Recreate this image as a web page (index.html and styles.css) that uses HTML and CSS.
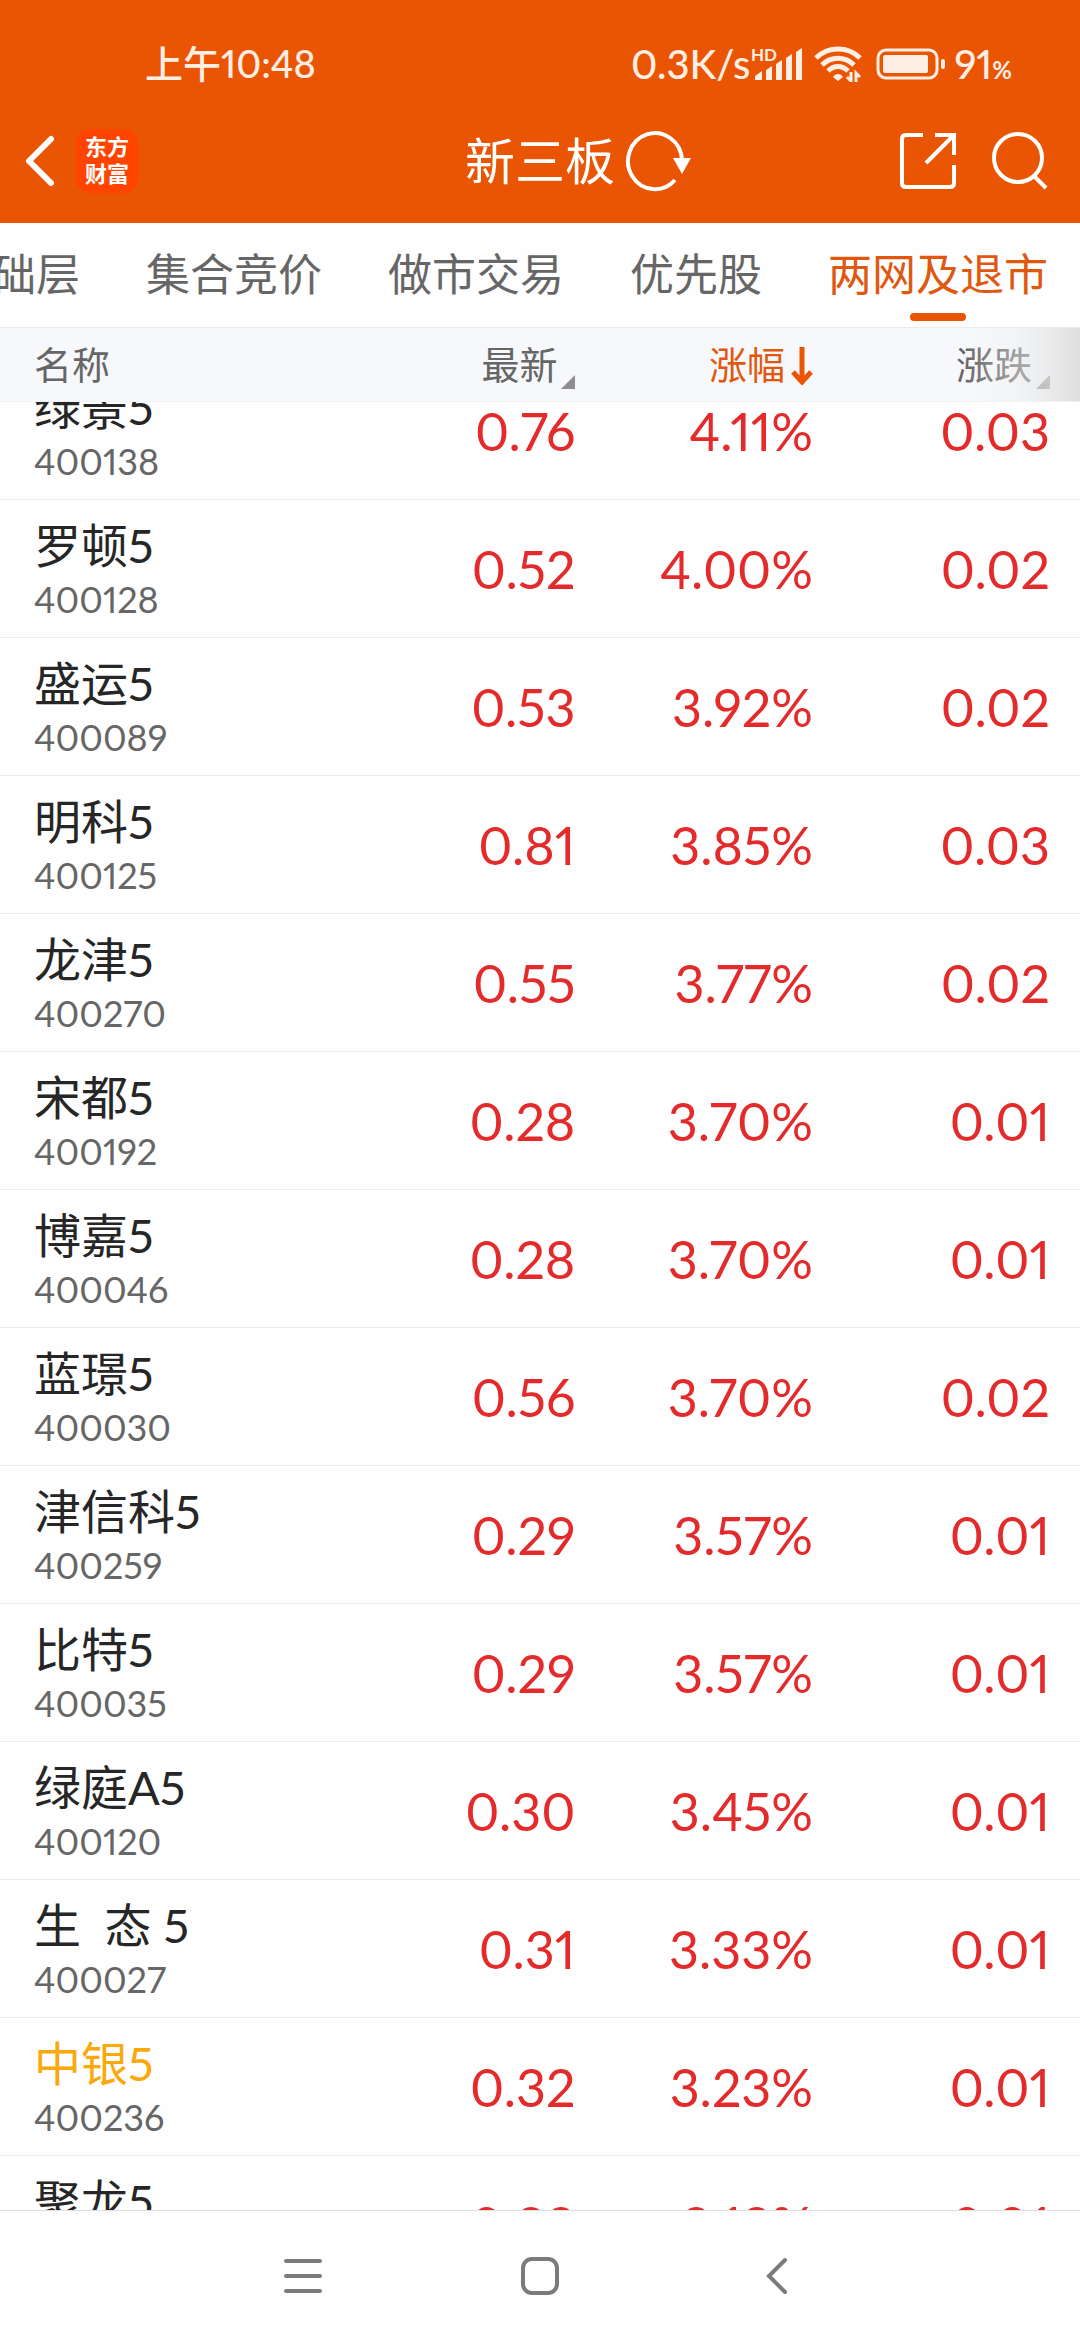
FILE: index.html
```html
<!DOCTYPE html>
<html lang="zh-CN">
<head>
<meta charset="UTF-8">
<meta name="viewport" content="width=device-width, initial-scale=1.0">
<title>新三板</title>
<link rel="stylesheet" href="styles.css">
<script src="main.js" defer></script>
</head>
<body>
    <header class="top">
        <div class="status">
            <span class="time">上午10:48</span>
            <div class="status-right">
                <span>0.3K/s</span>
                <svg class="signal" width="54" height="36" viewBox="0 0 54 36">
                    <text x="1" y="15" class="hd">HD</text>
                    <path d="M5 30l7-5v9H5zM16 24l6-4v14h-6zM26 18l6-4v20h-6zM36 12l6-4v26h-6zM46 6l6-4v32h-6z"/>
                </svg>
                <svg class="wifi" width="48" height="36" viewBox="0 0 48 36">
                    <g fill="none" stroke-width="5">
                        <path d="M2 12C14 0 34 0 46 12"/>
                        <path d="M8 19C17 10 31 10 40 19"/>
                        <path d="M14 25C20 19 28 19 34 25"/>
                    </g>
                    <path d="M19 31c2-4 8-4 10 0l-5 4z" stroke="none"/>
                    <path d="M37 26v9l-4-4M42 36v-9l4 4" fill="none" stroke-width="3"/>
                </svg>
                <svg class="battery" width="70" height="32" viewBox="0 0 70 32">
                    <rect x="2" y="2" width="59" height="28" rx="8" fill="none" stroke-width="3"/>
                    <rect x="7" y="7" width="45" height="18" rx="2" stroke="none"/>
                    <rect x="65" y="11" width="4" height="10" rx="2" stroke="none"/>
                </svg>
                <span>91<small>%</small></span>
            </div>
        </div>
        <div class="bar">
            <div class="bar-left">
                <button class="icon-btn" aria-label="返回">
                    <svg width="32" height="52" viewBox="0 0 32 52"><path d="M27 4L5 26l22 22" fill="none" stroke="#fff" stroke-width="6" stroke-linecap="round" stroke-linejoin="round"/></svg>
                </button>
                <a class="logo" href="#">东方<br>财富</a>
            </div>
            <div class="bar-title">
                <h1>新三板</h1>
                <button class="icon-btn" aria-label="刷新">
                    <svg width="68" height="62" viewBox="0 0 68 62">
                        <path d="M57 30A27 28 0 1 0 50 50" fill="none" stroke="#fff" stroke-width="4"/>
                        <path d="M48 28h18l-9 16z" fill="#fff"/>
                    </svg>
                </button>
            </div>
            <div class="bar-right">
                <button class="icon-btn" aria-label="分享">
                    <svg width="56" height="56" viewBox="0 0 56 56">
                        <path d="M23 2H6Q2 2 2 6v44q0 4 4 4h44q4 0 4-4V32M35 2h19v20M54 2L26 30" fill="none" stroke="#fff" stroke-width="4"/>
                    </svg>
                </button>
                <button class="icon-btn" aria-label="搜索">
                    <svg width="56" height="58" viewBox="0 0 56 58">
                        <circle cx="26" cy="26" r="24" fill="none" stroke="#fff" stroke-width="4"/>
                        <path d="M42 44l12 12" stroke="#fff" stroke-width="4"/>
                    </svg>
                </button>
            </div>
        </div>
    </header>

    <nav class="tabs">
        <a href="#">基础层</a>
        <a href="#">集合竞价</a>
        <a href="#">做市交易</a>
        <a href="#">优先股</a>
        <a href="#" class="on">两网及退市</a>
    </nav>

    <!-- 行情列表 -->
    <main class="list" id="list">
        <table>
            <thead>
                <tr>
                    <th class="name">名称</th>
                    <th class="price">最新<i class="tri"></i></th>
                    <th class="rate on">涨幅<svg class="arrow" width="22" height="38" viewBox="0 0 22 38"><path d="M11 0v34M2 25l9 10 9-10" fill="none" stroke="#ea5504" stroke-width="5"/></svg></th>
                    <th class="diff">涨跌<i class="tri"></i></th>
                </tr>
            </thead>
            <tbody>
                <tr><td class="name"><b>绿景5</b><span>400138</span></td><td>0.76</td><td>4.11%</td><td class="diff">0.03</td></tr>
                <tr><td class="name"><b>罗顿5</b><span>400128</span></td><td>0.52</td><td>4.00%</td><td class="diff">0.02</td></tr>
                <tr><td class="name"><b>盛运5</b><span>400089</span></td><td>0.53</td><td>3.92%</td><td class="diff">0.02</td></tr>
                <tr><td class="name"><b>明科5</b><span>400125</span></td><td>0.81</td><td>3.85%</td><td class="diff">0.03</td></tr>
                <tr><td class="name"><b>龙津5</b><span>400270</span></td><td>0.55</td><td>3.77%</td><td class="diff">0.02</td></tr>
                <tr><td class="name"><b>宋都5</b><span>400192</span></td><td>0.28</td><td>3.70%</td><td class="diff">0.01</td></tr>
                <tr><td class="name"><b>博嘉5</b><span>400046</span></td><td>0.28</td><td>3.70%</td><td class="diff">0.01</td></tr>
                <tr><td class="name"><b>蓝璟5</b><span>400030</span></td><td>0.56</td><td>3.70%</td><td class="diff">0.02</td></tr>
                <tr><td class="name"><b>津信科5</b><span>400259</span></td><td>0.29</td><td>3.57%</td><td class="diff">0.01</td></tr>
                <tr><td class="name"><b>比特5</b><span>400035</span></td><td>0.29</td><td>3.57%</td><td class="diff">0.01</td></tr>
                <tr><td class="name"><b>绿庭A5</b><span>400120</span></td><td>0.30</td><td>3.45%</td><td class="diff">0.01</td></tr>
                <tr><td class="name"><b>生&ensp;态 5</b><span>400027</span></td><td>0.31</td><td>3.33%</td><td class="diff">0.01</td></tr>
                <tr><td class="name mine"><b>中银5</b><span>400236</span></td><td>0.32</td><td>3.23%</td><td class="diff">0.01</td></tr>
                <tr><td class="name"><b>聚龙5</b></td><td>0.33</td><td>3.13%</td><td class="diff">0.01</td></tr>
            </tbody>
        </table>
    </main>

    <!-- 系统导航键 -->
    <footer class="keys">
        <button class="icon-btn" aria-label="菜单">
            <svg width="38" height="40" viewBox="0 0 38 40"><path d="M2 5h34M2 20h34M2 35h34" stroke="#7b7b7b" stroke-width="4" stroke-linecap="round"/></svg>
        </button>
        <button class="icon-btn" aria-label="主页">
            <svg width="38" height="40" viewBox="0 0 38 40"><rect x="2" y="3" width="34" height="34" rx="9" fill="none" stroke="#7b7b7b" stroke-width="4"/></svg>
        </button>
        <button class="icon-btn" aria-label="后退">
            <svg width="38" height="40" viewBox="0 0 38 40"><path d="M27 4L11 20l16 16" fill="none" stroke="#7b7b7b" stroke-width="4" stroke-linecap="round"/></svg>
        </button>
    </footer>
</body>
</html>
```

FILE: styles.css
```css
*{
    box-sizing: border-box;
}
body{
    margin: 0;
    height: 100vh;
    display: flex;
    flex-direction: column;
    background: #fefefe;
    font-family: Lato, "Noto Sans CJK SC", sans-serif;
    font-variant-numeric: proportional-nums;
    color: #666;
    overflow: hidden;
}
a{
    color: inherit;
    text-decoration: none;
}
.icon-btn{
    display: block;
    padding: 0;
    border: 0;
    background: none;
}
svg{
    display: block;
}

/* 顶部 */
.top{
    background: #ea5504;
    color: #fff;
}
.status{
    display: flex;
    justify-content: space-between;
    align-items: center;
    height: 128px;
    padding: 0 68px 0 145px;
    font-size: 40px;
    font-weight: 500;
    color: #ffeee4;
}
.time{
    padding-bottom: 6px;
    font-size: 38px;
}
.status-right{
    display: flex;
    align-items: center;
}
.status-right svg{
    fill: #ffeee4;
    stroke: #ffeee4;
}
.status-right .signal{
    stroke: none;
}
.hd{
    font-size: 17px;
    font-weight: 700;
}
.wifi{
    margin: 0 14px 0 10px;
}
.battery{
    margin-right: 8px;
}
.status small{
    font-size: 24px;
    font-weight: 700;
}
.bar{
    display: grid;
    grid-template-columns: 1fr auto 1fr;
    align-items: center;
    height: 95px;
    padding: 0 32px 30px 24px;
}
.bar-left, .bar-title, .bar-right{
    display: flex;
    align-items: center;
}
.bar-left{
    gap: 20px;
}
/* 左边留出刷新按钮的宽度, 标题文字居中 */
.bar-title{
    gap: 10px;
    padding-left: 86px;
}
.bar-right{
    justify-content: flex-end;
    gap: 36px;
}
.bar h1{
    margin: 0;
    font-size: 50px;
    font-weight: 400;
    line-height: 64px;
}
.logo{
    width: 62px;
    height: 64px;
    padding-top: 4px;
    border-radius: 14px;
    background: #ff4400;
    font-size: 22px;
    font-weight: 700;
    line-height: 27px;
    text-align: center;
}

/* 分类标签 */
.tabs{
    display: flex;
    justify-content: flex-end;
    gap: 66px;
    height: 105px;
    padding-right: 32px;
    border-bottom: 1px solid #ebebeb;
    font-size: 44px;
    line-height: 102px;
    white-space: nowrap;
}
.tabs .on{
    position: relative;
    color: #e0580f;
}
.tabs .on::after{
    content: "";
    position: absolute;
    left: 50%;
    bottom: 6px;
    width: 56px;
    height: 8px;
    margin-left: -28px;
    border-radius: 4px;
    background: #ea5504;
}

/* 列表 */
.list{
    flex: 1;
    min-height: 0;
    overflow-y: auto;
    scrollbar-width: none;
}
table{
    width: 100%;
    table-layout: fixed;
    border-spacing: 0;
}
th{
    position: sticky;
    top: 0;
    height: 74px;
    padding: 0 0 2px;
    background: #f6f8fb;
    border-bottom: 1px solid #f2f2f2;
    font-size: 38px;
    font-weight: 400;
    line-height: 56px;
    text-align: right;
}
th.price, th.rate{
    width: 22%;
}
th.diff{
    width: 267px;
}
th.on{
    color: #e0580f;
}
/* 右侧渐变, 提示可以横向滑动 */
th.diff::after{
    content: "";
    position: absolute;
    top: 0;
    right: 0;
    bottom: 0;
    width: 116px;
    background: linear-gradient(to right, rgba(246,248,251,0), rgba(240,240,240,.4) 40%, rgba(228,228,228,.6) 70%, #dedede);
}
.tri{
    display: inline-block;
    margin-left: 4px;
    border-left: 14px solid transparent;
    border-bottom: 14px solid #8e8e92;
    vertical-align: -10px;
}
.arrow{
    display: inline-block;
    margin-left: 6px;
    vertical-align: -6px;
}
td{
    height: 138px;
    padding: 0;
    border-bottom: 1px solid #ebebeb;
    font-size: 52px;
    text-align: right;
    color: #e42b2b;
}
th.name, td.name{
    padding-left: 34px;
    text-align: left;
}
th.diff, td.diff{
    padding-right: 30px;
}
td.name{
    padding-top: 17px;
    vertical-align: top;
}
td b, td span{
    display: block;
}
td b{
    font-size: 47px;
    font-weight: 400;
    line-height: 56px;
    color: #262626;
}
td span{
    font-size: 36px;
    line-height: 52px;
    color: #666;
}
.mine b{
    color: #f9a90c;
}

/* 底部 */
.keys{
    display: flex;
    justify-content: center;
    align-items: center;
    gap: 199px;
    height: 130px;
    border-top: 1px solid #dedede;
}
```

FILE: main.js
```js
// 打开时停在上次浏览的位置
var lastTop = 40;

window.addEventListener("load", function(){
    document.getElementById("list").scrollTop = lastTop;
});
```
